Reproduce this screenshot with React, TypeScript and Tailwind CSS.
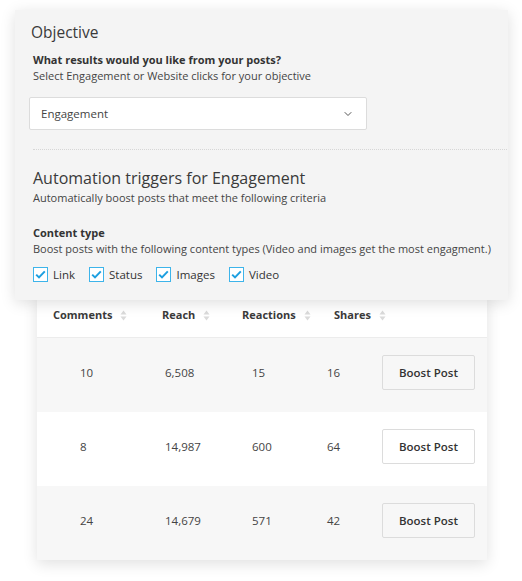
import { ChevronDown } from "lucide-react";

const rows = [
  { comments: "10", reach: "6,508", reactions: "15", shares: "16" },
  { comments: "8", reach: "14,987", reactions: "600", shares: "64" },
  { comments: "24", reach: "14,679", reactions: "571", shares: "42" },
];

const types = ["Link", "Status", "Images", "Video"];

function SortIcon() {
  return (
    <svg width="7" height="11" viewBox="0 0 7 11" className="ml-2 inline-block shrink-0">
      <path d="M3.5 0.5 L6.5 4.5 H0.5 Z" fill="#dadada" />
      <path d="M3.5 10.5 L6.5 6.5 H0.5 Z" fill="#dadada" />
    </svg>
  );
}

function Check({ label }: { label: string }) {
  return (
    <label className="flex items-center gap-[5px]">
      <span className="flex h-[15px] w-[15px] items-center justify-center border-[1.5px] border-[#3db4ea] bg-white">
        <svg width="11" height="9" viewBox="0 0 11 9">
          <path d="M1.2 4.6 L4 7.4 L9.8 1.4" stroke="#1d9fe0" strokeWidth="2" fill="none" />
        </svg>
      </span>
      <span className="text-[11.5px] text-[#333]">{label}</span>
    </label>
  );
}

function App() {
  return (
    <div className="min-h-[581px] bg-white pt-[10px] font-['Open_Sans',sans-serif] text-[#333]">
      {/* Settings card */}
      <div className="relative z-10 ml-[15px] h-[290px] w-[493px] bg-[#f4f4f4] pl-[18px] pr-[10px] pt-[11px] shadow-[0_3px_14px_rgba(0,0,0,0.13)]">
        <h2 className="-ml-0.5 text-[15.5px] leading-[22px] text-[#3a3a3a]">Objective</h2>
        <p className="mt-[9px] text-[11px] font-bold leading-[16px]">What results would you like from your posts?</p>
        <p className="text-[11px] leading-[16px] text-[#444]">Select Engagement or Website clicks for your objective</p>
        <div className="-ml-1 mt-[13px] flex h-[33px] w-[338px] items-center justify-between rounded-[2px] border border-[#dcdcdc] bg-white pl-[11px] pr-[12px]">
          <span className="text-[11.5px] text-[#444]">Engagement</span>
          <ChevronDown size={12} strokeWidth={2} color="#555" />
        </div>
        <div className="mt-[19px] -mr-[9px] border-t border-dotted border-[#d6d6d6]" />
        <h3 className="mt-[17px] text-[16px] leading-[22px] text-[#3a3a3a]">Automation triggers for Engagement</h3>
        <p className="mt-[1px] text-[11px] leading-[16px] text-[#444]">Automatically boost posts that meet the following criteria</p>
        <p className="mt-[19px] text-[11px] font-bold leading-[16px]">Content type</p>
        <p className="whitespace-nowrap text-[11px] leading-[16px] text-[#444]">
          Boost posts with the following content types (Video and images get the most engagment.)
        </p>
        <div className="mt-[9px] flex items-center gap-[14px]">
          {types.map((t) => (
            <Check key={t} label={t} />
          ))}
        </div>
      </div>

      {/* Posts table */}
      <div className="-mt-[6px] ml-[37px] w-[450px] bg-white shadow-[0_4px_14px_rgba(0,0,0,0.12)]">
        <div className="flex h-[44px] items-center border-b border-[#ececec] pl-[16px] text-[11px] font-bold text-[#3a3a3a]">
          <div className="flex w-[109px] items-center">Comments<SortIcon /></div>
          <div className="flex w-[80px] items-center">Reach<SortIcon /></div>
          <div className="flex w-[92px] items-center">Reactions<SortIcon /></div>
          <div className="flex items-center">Shares<SortIcon /></div>
        </div>
        {rows.map((r, i) => (
          <div
            key={i}
            className={`flex h-[74px] items-start pl-[16px] pt-[17px] text-[11.5px] text-[#444] ${i % 2 === 0 ? "bg-[#f7f7f7]" : "bg-white"}`}
          >
            <div className="flex h-[35px] items-center">
              <div className="w-[109px] pl-[27px]">{r.comments}</div>
              <div className="w-[80px] pl-[3px]">{r.reach}</div>
              <div className="w-[85px] pl-[10px]">{r.reactions}</div>
              <div className="w-[55px]">{r.shares}</div>
            </div>
            <button className="h-[35px] w-[93px] rounded-[2px] border border-[#dcdcdc] text-[11.5px] font-semibold text-[#333]">
              Boost Post
            </button>
          </div>
        ))}
      </div>
    </div>
  );
}

export default App;
